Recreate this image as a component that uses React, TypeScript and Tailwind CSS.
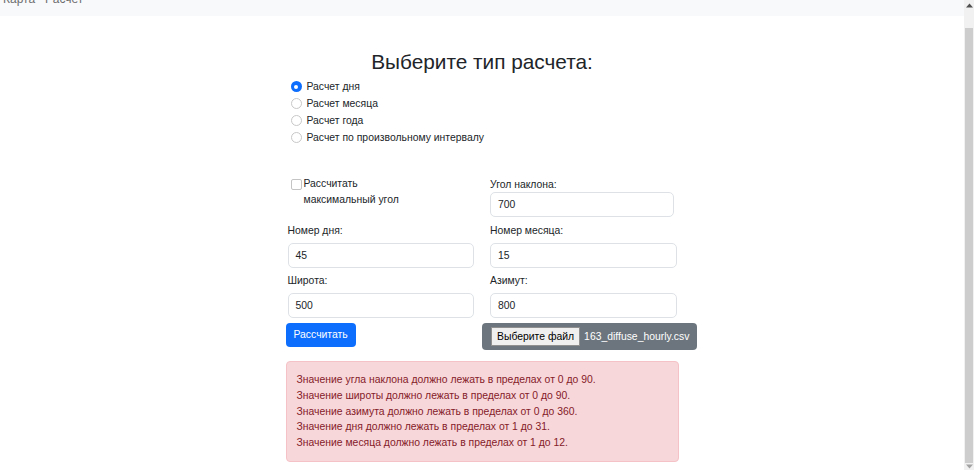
import React from 'react';

const errors = [
  'Значение угла наклона должно лежать в пределах от 0 до 90.',
  'Значение широты должно лежать в пределах от 0 до 90.',
  'Значение азимута должно лежать в пределах от 0 до 360.',
  'Значение дня должно лежать в пределах от 1 до 31.',
  'Значение месяца должно лежать в пределах от 1 до 12.',
];

const modes = ['Расчет дня', 'Расчет месяца', 'Расчет года', 'Расчет по произвольному интервалу'];

function Radio({ checked }: { checked?: boolean }) {
  return checked ? (
    <span className="w-[11px] h-[11px] rounded-full bg-[#0d6efd] flex items-center justify-center shrink-0">
      <span className="w-[4px] h-[4px] rounded-full bg-white" />
    </span>
  ) : (
    <span className="w-[11px] h-[11px] rounded-full border border-[#c8c8c8] bg-white shrink-0" />
  );
}

function Field({ value, className = '' }: { value: string; className?: string }) {
  return (
    <div className={`h-[25px] border border-[#dee2e6] rounded-[5px] bg-white flex items-center pl-[7px] text-[10.4px] text-[#212529] ${className}`}>
      {value}
    </div>
  );
}

export default function App() {
  return (
    <div className="flex h-[470px] overflow-hidden bg-white text-[#212529] font-['Liberation_Sans',Arial,sans-serif]">
      <div className="flex-1 flex flex-col">
        {/* Navbar */}
        <nav className="h-[16px] bg-[#f8f9fa] overflow-hidden shrink-0">
          <div className="flex gap-[10px] pl-[3px] -mt-[8px] text-[12px] leading-[14px] text-[#6d6e70]">
            <span>Карта</span>
            <span>Расчет</span>
          </div>
        </nav>

        <div className="w-[393px] mx-auto">
          <h2 className="mt-[33px] text-center text-[20.8px] leading-[25px] font-normal">Выберите тип расчета:</h2>

          <div className="mt-[4px] pl-[5px] flex flex-col text-[10.4px] leading-[17px]">
            {modes.map((m, i) => (
              <label key={m} className="flex items-center gap-[5px]">
                <Radio checked={i === 0} />
                <span>{m}</span>
              </label>
            ))}
          </div>

          <div className="mt-[30px] px-[2px] grid grid-cols-2 gap-x-4 text-[10.4px]">
            <div className="flex items-start pl-[3px] pt-[3px]">
              <span className="w-[11px] h-[11px] rounded-[2px] border border-[#c4c4c4] bg-white shrink-0" />
              <span className="ml-[2px] -mt-[3px] leading-[16px]">
                Рассчитать
                <br />
                максимальный угол
              </span>
            </div>
            <div>
              <div className="mt-[2px] leading-[14px]">Угол наклона:</div>
              <Field value="700" className="mr-[3px]" />
            </div>

            <div className="mt-[5px]">
              <div className="leading-[18px] mb-[3px]">Номер дня:</div>
              <Field value="45" />
            </div>
            <div className="mt-[5px]">
              <div className="leading-[18px] mb-[3px]">Номер месяца:</div>
              <Field value="15" />
            </div>

            <div className="mt-[4px]">
              <div className="leading-[18px] mb-[3px]">Широта:</div>
              <Field value="500" />
            </div>
            <div className="mt-[4px]">
              <div className="leading-[18px] mb-[3px]">Азимут:</div>
              <Field value="800" />
            </div>
          </div>

          <div className="mt-[5px] grid grid-cols-2 text-[10.4px]">
            <div>
              <button className="h-[24px] px-[8px] rounded-[4px] bg-[#0d6efd] text-white">Рассчитать</button>
            </div>
            <div>
              <div className="w-[215px] h-[27px] rounded-[4px] bg-[#6c757d] flex items-center pl-[9px] gap-[4px] text-white whitespace-nowrap">
                <span className="h-[19px] px-[5px] flex items-center bg-[#efefef] border border-[#8f8f8f] text-black">
                  Выберите файл
                </span>
                <span>163_diffuse_hourly.csv</span>
              </div>
            </div>
          </div>

          <div className="mt-[11px] h-[101px] border border-[#f5c2c7] bg-[#f8d7da] rounded-[4px] px-[10px] pt-[10px] text-[10.4px] leading-[15.75px] text-[#842029]">
            {errors.map((e) => (
              <div key={e}>{e}</div>
            ))}
          </div>
        </div>
      </div>

      {/* Scrollbar */}
      <aside className="w-[10px] bg-[#f1f1f1] flex flex-col items-center shrink-0">
        <svg width="7" height="5" viewBox="0 0 7 5" className="mt-[3px]">
          <path d="M0 4.5 L3.5 0.5 L7 4.5 Z" fill="#505050" />
        </svg>
        <div className="mt-[20px] w-[8px] h-[435px] bg-[#cdcdcd]" />
        <svg width="7" height="5" viewBox="0 0 7 5" className="mt-[1px]">
          <path d="M0 0.5 L3.5 4.5 L7 0.5 Z" fill="#a3a3a3" />
        </svg>
      </aside>
    </div>
  );
}
